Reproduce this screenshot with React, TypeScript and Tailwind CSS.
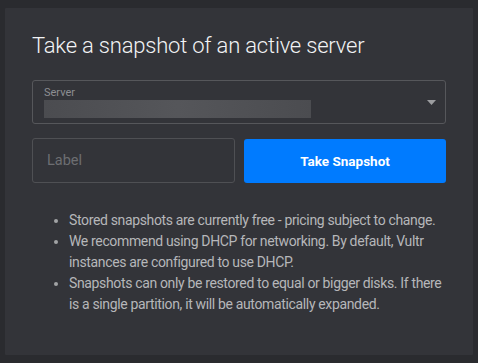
import { useState } from 'react';

const notes = [
  'Stored snapshots are currently free - pricing subject to change.',
  'We recommend using DHCP for networking. By default, Vultr instances are configured to use DHCP.',
  'Snapshots can only be restored to equal or bigger disks. If there is a single partition, it will be automatically expanded.',
];

const SnapshotCard = () => {
  const [label, setLabel] = useState('');

  return (
    <div className="bg-[#333439] h-[347px] pt-[24px] px-[27px] rounded-[1px]">
      <h2 className="text-[22px] leading-[28px] font-light text-[#f2f3f5] tracking-[-0.2px]">
        Take a snapshot of an active server
      </h2>

      {/* server select */}
      <div className="relative mt-[20px] h-[44px] border border-[#56575b] rounded-[3px] pl-[11px] pt-[5px]">
        <div className="text-[11px] leading-[13px] text-[#8d8e92]">Server</div>
        <div className="mt-[1px] h-[18px] w-[267px] bg-gradient-to-r from-[#4b4c50] via-[#55565a] to-[#4b4c50]" />
        <svg className="absolute right-[9px] top-[19px]" width="9" height="5" viewBox="0 0 9 5">
          <path d="M0 0 L9 0 L4.5 5 Z" fill="#9c9da0" />
        </svg>
      </div>

      <div className="mt-[14px] flex gap-[9px]">
        <input
          value={label}
          onChange={(e) => setLabel(e.target.value)}
          placeholder="Label"
          className="w-[203px] h-[45px] border border-[#4f5054] rounded-[3px] bg-transparent px-[14px] text-[14.5px] text-[#d0d1d3] placeholder:text-[#6d6e72] outline-none"
        />
        <button className="flex-1 h-[44px] mt-[1px] rounded-[3px] bg-[#007bff] text-white text-[13.5px] font-bold">
          Take Snapshot
        </button>
      </div>

      <ul className="mt-[27px] pl-[22px]">
        {notes.map((n) => (
          <li key={n} className="flex text-[14px] leading-[21px] tracking-[-0.35px] text-[#b6b7ba]">
            <span className="w-[15px] shrink-0">
              <span className="block mt-[9px] w-[4px] h-[4px] rounded-full bg-[#a2a3a6]" />
            </span>
            <span>{n}</span>
          </li>
        ))}
      </ul>
    </div>
  );
};

export default function App() {
  return (
    <div
      className="w-[478px] h-[363px] bg-[#2a2b2f] pt-[8px] px-[5px]"
      style={{ fontFamily: 'Roboto, "Liberation Sans", sans-serif' }}
    >
      <SnapshotCard />
    </div>
  );
}
